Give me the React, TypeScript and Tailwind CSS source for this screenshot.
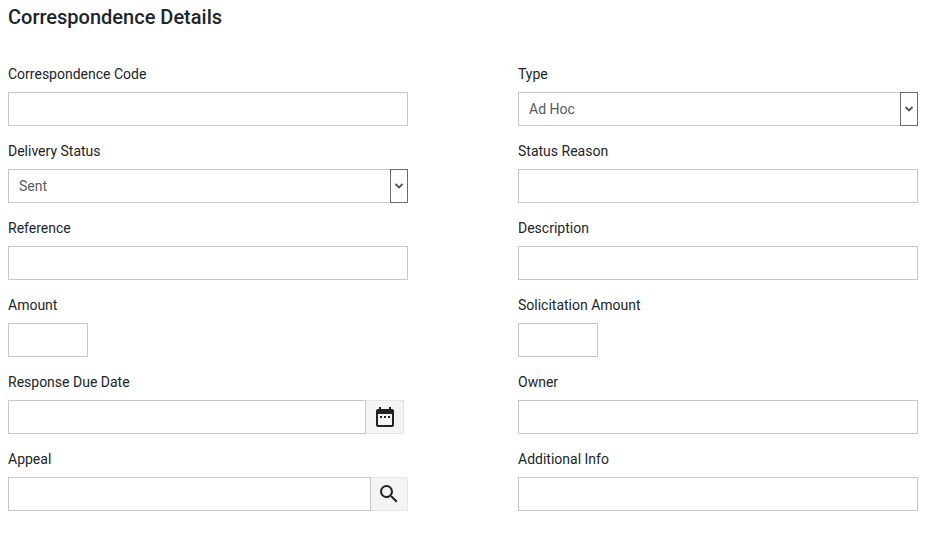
const inputBox = "h-[34px] border border-[#c8c8c8] bg-white";

function Label({ text }: { text: string }) {
  return <label className="block h-[34px] pt-[6px] text-[14px] leading-[20px] text-[#212529]">{text}</label>;
}

function TextField({ label, small }: { label: string; small?: boolean }) {
  return (
    <div>
      <Label text={label} />
      <div className={`${inputBox} ${small ? "w-[80px]" : "w-[400px]"}`} />
    </div>
  );
}

function SelectField({ label, value }: { label: string; value: string }) {
  return (
    <div>
      <Label text={label} />
      <div className={`${inputBox} w-[400px] flex items-center justify-between pl-[10px] pr-0`}>
        <span className="text-[14px] text-[#555b61]">{value}</span>
        <span className="w-[18px] h-[34px] -my-px -mr-px border border-[#6b6b6b] bg-white flex items-center justify-center">
          <svg width="10" height="8" viewBox="0 0 10 8" fill="none">
            <path d="M1.5 2 L5 5.5 L8.5 2" stroke="#555" strokeWidth="1.8" />
          </svg>
        </span>
      </div>
    </div>
  );
}

function DateField({ label }: { label: string }) {
  return (
    <div>
      <Label text={label} />
      <div className="flex w-[396px]">
        <div className={`${inputBox} flex-1`} />
        <button className="w-[38px] h-[34px] border border-l-0 border-[#e4e4e4] bg-[#f4f4f4] flex items-center justify-center">
          <svg width="24" height="24" viewBox="0 0 24 24" fill="#212121">
            <path d="M19 4h-1V2h-2v2H8V2H6v2H5a2 2 0 0 0-2 2v14a2 2 0 0 0 2 2h14a2 2 0 0 0 2-2V6a2 2 0 0 0-2-2zm0 16H5V9h14v11z" />
            <path d="M7 11h2v2H7zM11 11h2v2h-2zM15 11h2v2h-2z" />
          </svg>
        </button>
      </div>
    </div>
  );
}

function LookupField({ label }: { label: string }) {
  return (
    <div>
      <Label text={label} />
      <div className="flex w-[400px]">
        <div className={`${inputBox} flex-1`} />
        <button className="w-[37px] h-[34px] border border-l-0 border-[#e4e4e4] bg-[#f4f4f4] flex items-center justify-center">
          <svg width="24" height="24" viewBox="0 0 24 24" fill="#212121">
            <path d="M15.5 14h-.79l-.28-.27A6.47 6.47 0 0 0 16 9.5 6.5 6.5 0 1 0 9.5 16c1.61 0 3.09-.59 4.23-1.57l.27.28v.79l5 4.99L20.49 19l-4.99-5zm-6 0C7.01 14 5 11.99 5 9.5S7.01 5 9.5 5 14 7.01 14 9.5 11.99 14 9.5 14z" />
          </svg>
        </button>
      </div>
    </div>
  );
}

export default function App() {
  return (
    <div className="w-[934px] h-[536px] bg-white px-2 pt-[5px] font-['Roboto',sans-serif] overflow-hidden">
      <h2 className="text-[20px] leading-[24px] font-medium text-[#212529] mb-[29px]">Correspondence Details</h2>
      <div className="grid grid-cols-[400px_400px] gap-x-[110px] gap-y-[9px]">
        <TextField label="Correspondence Code" />
        <SelectField label="Type" value="Ad Hoc" />
        <SelectField label="Delivery Status" value="Sent" />
        <TextField label="Status Reason" />
        <TextField label="Reference" />
        <TextField label="Description" />
        <TextField label="Amount" small />
        <TextField label="Solicitation Amount" small />
        <DateField label="Response Due Date" />
        <TextField label="Owner" />
        <LookupField label="Appeal" />
        <TextField label="Additional Info" />
      </div>
    </div>
  );
}
